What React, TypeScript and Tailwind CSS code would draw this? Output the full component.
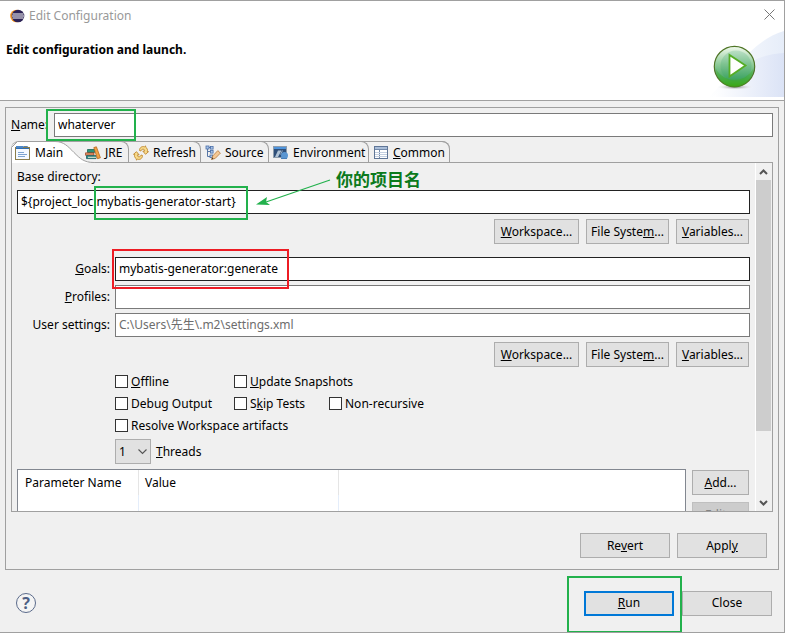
import React from "react";

type ButtonProps = { children: React.ReactNode; className: string; disabled?: boolean };

function PushButton({ children, className, disabled }: ButtonProps) {
  return (
    <button
      type="button"
      disabled={disabled}
      className={`h-[25px] shrink-0 border border-[#adadad] bg-[#e1e1e1] text-center disabled:border-[#bfbfbf] disabled:bg-[#cccccc] disabled:text-[#838383] ${className}`}
    >
      {children}
    </button>
  );
}

function LocationButtons() {
  return (
    <div className="mt-[5px] flex justify-end gap-[7px] pr-px">
      <PushButton className="w-[85px]"><u>W</u>orkspace...</PushButton>
      <PushButton className="w-[83px]">File Syste<u>m</u>...</PushButton>
      <PushButton className="w-[73px]"><u>V</u>ariables...</PushButton>
    </div>
  );
}

type CheckProps = { id: string; children: React.ReactNode; className?: string };

function Check({ id, children, className = "" }: CheckProps) {
  return (
    <div className={`flex h-[22px] items-center gap-[3px] ${className}`}>
      <input
        id={id}
        type="checkbox"
        className="mb-px size-[13px] shrink-0 appearance-none border border-[#333333] bg-white checked:bg-[#333333]"
      />
      <label htmlFor={id} className="whitespace-nowrap">{children}</label>
    </div>
  );
}

type TabProps = { icon: React.ReactNode; children: React.ReactNode; className: string };

function Tab({ icon, children, className }: TabProps) {
  return (
    <button
      type="button"
      role="tab"
      aria-selected="false"
      className={`-mt-px flex h-[22px] shrink-0 items-center gap-1 rounded-tr-[8px] border-t border-r border-[#a0a0a0] whitespace-nowrap ${className}`}
    >
      {icon}
      <span>{children}</span>
    </button>
  );
}

const iconClass = "size-4 shrink-0";
const fieldClass = "h-6 min-w-0 border bg-white px-[3px] pb-[2px]";

function EclipseIcon() {
  return (
    <svg viewBox="0 0 16 16" className={iconClass} aria-hidden="true">
      <circle cx="7.500" cy="8" r="6.300" fill="#f7941e" />
      <circle cx="9" cy="8" r="6.300" fill="#2c2255" />
      <path d="M3.500 6h11M3 8h12M3.500 10h11" stroke="#fff" strokeWidth="1" />
    </svg>
  );
}

function MainIcon() {
  return (
    <svg viewBox="0 0 16 16" className={iconClass} aria-hidden="true">
      <path d="M8.500 3V1.500h4V3" fill="#dbe9f8" stroke="#5782b4" />
      <rect x=".5" y="2.500" width="14" height="12" fill="#f4f9ff" stroke="#8a7d4a" />
      <path d="M1 1h7v3H1z" fill="#4b86c6" />
      <path d="M1 3.500h13" stroke="#2f6db5" />
      <path d="M3 7.500h6M3 9.500h9M3 11.500h7" stroke="#7da3d0" />
    </svg>
  );
}

function JreIcon() {
  return (
    <svg viewBox="0 0 16 16" className={iconClass} aria-hidden="true">
      <path d="M2.500 4.500h7v3h-7z" fill="#2b9078" stroke="#176454" strokeWidth=".8" />
      <path d="M.5 7.800h8.500v2.500H.5z" fill="#c8552a" stroke="#8f3c1d" strokeWidth=".6" />
      <path d="M1 8.600h7.500v.8H1z" fill="#f0c9a5" />
      <path d="M1.500 10.600H11v3H1.500z" fill="#2f8b86" stroke="#1c5c62" strokeWidth=".8" />
      <path d="M3 11.800h8v1H3z" fill="#e9e7d2" />
      <path d="m8.800 2.600 2.600-.8 4 11-3 .9z" fill="#f0a045" stroke="#b56718" strokeWidth=".8" />
    </svg>
  );
}

function RefreshIcon() {
  return (
    <svg viewBox="0 0 16 16" className={iconClass} aria-hidden="true">
      <g fill="#f9dc8c" stroke="#bd862d" strokeWidth=".9" strokeLinejoin="round">
        <path d="M6.500 5.500C6.500 2.500 9 1 11.500 1.800l1-.9.300 1.400C14.500 3.500 14.800 5 14.200 6.500l1.300.2-3 2.600L9.800 6l1.700.2c.3-1.300-.3-2-1.500-2-1 0-1.800.6-2 1.800z" />
        <path d="M9.500 10.500c0 3-2.500 4.500-5 3.700l-1 .9-.3-1.400C1.500 12.500 1.200 11 1.800 9.500L.5 9.300l3-2.600L6.200 10l-1.700-.2c-.3 1.300.3 2 1.500 2 1 0 1.800-.6 2-1.800z" />
      </g>
    </svg>
  );
}

function SourceIcon() {
  return (
    <svg viewBox="0 0 16 16" className={iconClass} aria-hidden="true">
      <path d="M2.500 3v8.500H6M2.500 6.500H6M4 2.500h3" fill="none" stroke="#5877a6" />
      <g fill="#a9c3e8" stroke="#4a6fa8" strokeWidth=".8">
        <rect x="1" y="1" width="3" height="3" />
        <rect x="5.500" y="1.500" width="2.600" height="2.600" />
        <rect x="5.500" y="5.500" width="2.600" height="2.600" />
        <rect x="5" y="10" width="2.600" height="2.600" />
      </g>
      <path d="m6.500 14.500 1.300-3.600 5-5.300 2.600 2.500-5.200 5.300z" fill="#f5c894" stroke="#b5783d" strokeWidth=".8" />
      <path d="m6.500 14.500.7-2 1.400 1.300z" fill="#4a3a28" />
    </svg>
  );
}

function EnvironmentIcon() {
  return (
    <svg viewBox="0 0 16 16" className={iconClass} aria-hidden="true">
      <rect x=".5" y="1.500" width="13" height="11" fill="#2f4f78" stroke="#8f9dac" />
      <path d="M1 2h12v2H1z" fill="#4f94dc" />
      <path d="m2 12 3-6.500h3.500L5 12z" fill="#dce9f5" opacity=".75" />
      <path d="m9.500 5.500-2 4" stroke="#dce9f5" opacity=".6" />
      <circle cx="11.500" cy="10.500" r="3.500" fill="#5c97d2" />
      <path d="M8 13.500h6" stroke="#4a7fb8" />
    </svg>
  );
}

function CommonIcon() {
  return (
    <svg viewBox="0 0 16 16" className={iconClass} aria-hidden="true">
      <rect x="1.500" y="1.500" width="13" height="12" fill="#fff" stroke="#5f7596" />
      <path d="M2 2h12v2H2z" fill="#a9bdd8" />
      <path d="M2 4.500h12M6.500 4v9" stroke="#7289aa" />
      <path d="M2 7.500h12M2 9.500h12M2 11.500h12" stroke="#c3cfe0" />
    </svg>
  );
}

function RunBanner() {
  return (
    <svg viewBox="0 0 75 69" className="h-[69px] w-[75px] shrink-0" aria-hidden="true">
      <defs>
        <linearGradient id="swoosh" x1="0" x2="1">
          <stop offset="0" stopColor="#fff" />
          <stop offset="1" stopColor="#dbe3f6" />
        </linearGradient>
        <linearGradient id="swooshTop" x1="0" x2="1">
          <stop offset="0" stopColor="#fff" />
          <stop offset="1" stopColor="#e6edf9" />
        </linearGradient>
        <linearGradient id="ball" x1="0" y1="0" x2="0" y2="1">
          <stop offset="0" stopColor="#f2faee" />
          <stop offset=".45" stopColor="#8ecb98" />
          <stop offset=".78" stopColor="#4aa968" />
          <stop offset="1" stopColor="#39a50f" />
        </linearGradient>
        <radialGradient id="shadow">
          <stop offset="0" stopColor="#777" />
          <stop offset="1" stopColor="#fff" stopOpacity="0" />
        </radialGradient>
      </defs>
      <path d="M0 69C24 46 43 12 75 3v66z" fill="url(#swooshTop)" />
      <path d="M4 69C23 44 44 26 75 25v44z" fill="url(#swoosh)" />
      <ellipse cx="26" cy="59" rx="19" ry="3" fill="url(#shadow)" />
      <circle cx="25.500" cy="38.500" r="20.200" fill="url(#ball)" stroke="#4f7527" strokeWidth="1.200" />
      <circle cx="27" cy="38" r="15.500" fill="#2f9a6a" opacity=".18" />
      <path d="M7 41a18.500 18.500 0 0 0 37 0c-4 7-11 11-18.500 11S11 48 7 41z" fill="#3fae19" opacity=".4" />
      <path d="M20.500 27v21.500L36.500 37.500z" fill="#fff" stroke="#55ad25" strokeWidth="1.800" />
    </svg>
  );
}

export default function App() {
  return (
    <main className="flex h-screen w-full flex-col overflow-hidden border-t border-r border-b border-[#a0a0a0] bg-[#f0f0f0] font-['Noto_Sans','Noto_Sans_CJK_SC',sans-serif] text-[12px] leading-4 text-black">
      <header className="flex h-[100px] shrink-0 justify-between border-b border-[#a0a0a0] bg-white">
        <div className="flex flex-col pl-[6px]">
          <div className="flex h-[30px] items-center gap-1 pl-[3px] text-[#999999]">
            <EclipseIcon />
            <span>Edit Configuration</span>
          </div>
          <h1 className="mt-[11px] font-bold">Edit configuration and launch.</h1>
        </div>
        <div className="flex flex-col items-end">
          <button type="button" aria-label="Close window" className="flex h-[27px] w-[30px] items-center justify-center">
            <svg viewBox="0 0 11 11" className="size-[11px]" aria-hidden="true">
              <path d="m.5.5 10 10m0-10-10 10" stroke="#777" strokeWidth="1" />
            </svg>
          </button>
          <RunBanner />
        </div>
      </header>

      <section className="mx-[5px] mt-[6px] flex min-h-0 flex-1 flex-col border border-[#a0a0a0] p-[5px] pb-[11px]">
        <div className="relative flex shrink-0 items-center">
          <label htmlFor="config-name" className="w-[43px] shrink-0"><u>N</u>ame:</label>
          <input id="config-name" defaultValue="whaterver" className={`${fieldClass} flex-1 border-[#7a7a7a]`} />
          <div className="pointer-events-none absolute -top-1 left-[35px] h-8 w-[90px] border-2 border-[#22b14c]" />
        </div>

        <div role="tablist" className="relative z-10 mt-1 -mb-px flex h-[22px] shrink-0 self-start rounded-t-[8px] border-t border-[#a0a0a0]">
          <button type="button" role="tab" aria-selected="true" className="relative -mt-px h-[22px] w-[69px] shrink-0">
            <svg viewBox="0 0 84 22" className="absolute top-0 left-0 h-[22px] w-[84px]" aria-hidden="true">
              <path d="M.5 22V6.500L6.500.5H44c9 0 13 5 19 11s10 10 18 10l3 .5z" fill="#fff" />
              <path d="M.5 22V6.500L6.500.5H44c9 0 13 5 19 11s10 10 20 10" fill="none" stroke="#a0a0a0" />
            </svg>
            <span className="relative flex h-[22px] items-center gap-1 pt-px pl-1">
              <MainIcon />
              <span>Main</span>
            </span>
          </button>
          <Tab icon={<JreIcon />} className="w-[49px] pl-[5px]">JRE</Tab>
          <Tab icon={<RefreshIcon />} className="w-[72px] pl-1">Refresh</Tab>
          <Tab icon={<SourceIcon />} className="w-[68px] pl-1">Source</Tab>
          <Tab icon={<EnvironmentIcon />} className="w-[100px] pl-1">Environment</Tab>
          <Tab icon={<CommonIcon />} className="w-[81px] pl-1"><u>C</u>ommon</Tab>
        </div>

        <div className="flex min-h-0 flex-1 border border-[#a0a0a0]">
          <div className="min-w-0 flex-1 overflow-hidden pt-[6px] pr-[5px] pl-[5px]">
            <label htmlFor="base-dir" className="block">Base directory:</label>
            <div className="relative mt-[5px]">
              <input id="base-dir" defaultValue="${project_loc:mybatis-generator-start}" className={`${fieldClass} block w-full border-[#222222]`} />
              <div className="pointer-events-none absolute -top-[4px] left-[77px] h-[34px] w-[154px] border-2 border-[#22b14c]" />
              <svg viewBox="0 0 76 28" className="pointer-events-none absolute -top-[11px] left-[239px] h-[28px] w-[76px]" aria-hidden="true">
                <path d="M74 1 10 23" stroke="#22b14c" strokeWidth="1.200" />
                <path d="m0 25.500 11-7.500-1 5 4 3z" fill="#22b14c" />
              </svg>
              <span className="pointer-events-none absolute -top-5 left-[319px] text-[17px] leading-5 font-bold whitespace-nowrap text-[#0b7a1c]">你的项目名</span>
            </div>
            <LocationButtons />

            <div className="relative mt-[13px] grid grid-cols-[93px_1fr] items-center gap-x-[5px] gap-y-1">
              <label htmlFor="goals" className="text-right"><u>G</u>oals:</label>
              <input id="goals" defaultValue="mybatis-generator:generate" className={`${fieldClass} border-[#222222]`} />
              <label htmlFor="profiles" className="text-right"><u>P</u>rofiles:</label>
              <input id="profiles" className={`${fieldClass} border-[#7a7a7a]`} />
              <label htmlFor="settings" className="text-right">User settings:</label>
              <input id="settings" readOnly value="C:\Users\先生\.m2\settings.xml" className={`${fieldClass} border-[#7a7a7a] text-[#6d6d6d]`} />
              <div className="pointer-events-none absolute -top-2 left-[95px] h-10 w-[177px] border-2 border-[#ed1c24]" />
            </div>
            <LocationButtons />

            <div className="mt-1 grid grid-cols-[119px_95px_1fr] pl-[98px]">
              <Check id="offline"><u>O</u>ffline</Check>
              <Check id="snapshots" className="col-span-2"><u>U</u>pdate Snapshots</Check>
              <Check id="debug">Debu<u>g</u> Output</Check>
              <Check id="skip">S<u>k</u>ip Tests</Check>
              <Check id="recursive">Non-recursive</Check>
              <Check id="resolve" className="col-span-3">Resolve Workspace artifacts</Check>
            </div>
            <div className="mt-[2px] flex items-center gap-[5px] pl-[98px]">
              <div className="relative">
                <select id="threads" className="block h-[25px] w-9 appearance-none border border-[#adadad] bg-[#e1e1e1] pl-[3px]">
                  <option>1</option>
                  <option>2</option>
                  <option>4</option>
                </select>
                <svg viewBox="0 0 9 6" className="pointer-events-none absolute top-[10px] right-1 h-[6px] w-[9px]" aria-hidden="true">
                  <path d="m.5.5 4 4 4-4" fill="none" stroke="#555" strokeWidth="1.100" />
                </svg>
              </div>
              <label htmlFor="threads"><u>T</u>hreads</label>
            </div>

            <div className="mt-[5px] flex gap-[6px] pr-px">
              <div className="h-[120px] min-w-0 flex-1 border border-[#828790] bg-white">
                <table className="w-full table-fixed border-separate border-spacing-0 text-left">
                  <thead>
                    <tr className="h-[25px]">
                      <th className="w-[121px] border-r border-[#e5e5e5] pl-[7px] font-normal">Parameter Name</th>
                      <th className="w-[200px] border-r border-[#e5e5e5] pl-[6px] font-normal">Value</th>
                      <th aria-label="Empty" />
                    </tr>
                  </thead>
                  <tbody>
                    <tr className="h-[93px]">
                      <td className="border-r border-[#e4edfa]" />
                      <td className="border-r border-[#e4edfa]" />
                      <td />
                    </tr>
                  </tbody>
                </table>
              </div>
              <div className="flex flex-col gap-[7px] pt-px">
                <PushButton className="w-[57px]"><u>A</u>dd...</PushButton>
                <PushButton className="w-[57px]" disabled><u>E</u>dit...</PushButton>
              </div>
            </div>
          </div>

          <div className="flex w-[17px] shrink-0 flex-col border-l border-white pr-px" aria-hidden="true">
            <div className="flex h-[17px] items-center justify-center">
              <svg viewBox="0 0 9 6" className="h-[6px] w-[9px]">
                <path d="m1 5 3.500-3.500L8 5" fill="none" stroke="#555" strokeWidth="2" />
              </svg>
            </div>
            <div className="flex-1">
              <div className="h-4/5 bg-[#cdcdcd]" />
            </div>
            <div className="flex h-[17px] items-center justify-center">
              <svg viewBox="0 0 9 6" className="h-[6px] w-[9px]">
                <path d="m1 1 3.500 3.500L8 1" fill="none" stroke="#555" strokeWidth="2" />
              </svg>
            </div>
          </div>
        </div>

        <div className="mt-[21px] flex shrink-0 justify-end gap-[7px] pr-[6px]">
          <PushButton className="w-[90px]">Re<u>v</u>ert</PushButton>
          <PushButton className="w-[90px]">Appl<u>y</u></PushButton>
        </div>
      </section>

      <footer className="flex h-[62px] shrink-0 items-center justify-between pt-1 pr-3 pl-4">
        <button type="button" aria-label="Help" className="size-5 rounded-full border border-[#5b6b8b] bg-[#f4f4f4] text-[16px] leading-[18px] font-bold text-[#4d5f84]">?</button>
        <div className="flex gap-2">
          <div className="relative">
            <button type="button" className="block h-[25px] w-[90px] border-2 border-[#0078d7] bg-[#e1e1e1]"><u>R</u>un</button>
            <div className="pointer-events-none absolute -top-[15px] -left-[17px] z-10 h-[57px] w-[115px] border-2 border-[#22b14c]" />
          </div>
          <PushButton className="w-[90px]">Close</PushButton>
        </div>
      </footer>
    </main>
  );
}
